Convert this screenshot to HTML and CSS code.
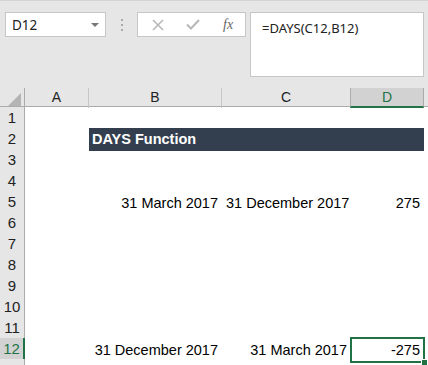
FILE: index.html
```html
<!DOCTYPE html>
<html lang="en">
<head>
    <meta charset="UTF-8">
    <title>DAYS Function</title>
    <link rel="stylesheet" href="styles.css">
</head>
<body>
    <div class="window">
        <div class="toolbar">
            <div class="name-box">
                <span>D12</span>
                <span class="caret"></span>
            </div>
            <div class="dots"><i></i><i></i><i></i></div>
            <div class="fx-buttons">
                <svg width="12" height="12" viewBox="0 0 12 12"><path d="M1 1 L11 11 M11 1 L1 11" stroke="#b8b8b8" stroke-width="1.6" fill="none"/></svg>
                <svg width="14" height="11" viewBox="0 0 14 11"><path d="M1 5.5 L5 9.5 L13 1" stroke="#b8b8b8" stroke-width="2" fill="none"/></svg>
                <span class="fx">fx</span>
            </div>
            <div class="formula">=DAYS(C12,B12)</div>
        </div>

        <div class="sheet">
            <div class="row head">
                <div class="corner"><svg width="13" height="13" viewBox="0 0 13 13"><path d="M13 0 L13 13 L0 13 Z" fill="#b4b4b4"/></svg></div>
                <div class="col">A</div>
                <div class="col">B</div>
                <div class="col">C</div>
                <div class="col active">D</div>
                <div class="col rest"></div>
            </div>
            <div class="row"><div class="num">1</div></div>
            <div class="row">
                <div class="num">2</div>
                <div class="cell"></div>
                <div class="cell title">DAYS Function</div>
            </div>
            <div class="row"><div class="num">3</div></div>
            <div class="row"><div class="num">4</div></div>
            <div class="row">
                <div class="num">5</div>
                <div class="cell"></div>
                <div class="cell right">31 March 2017</div>
                <div class="cell right">31 December 2017</div>
                <div class="cell right">275</div>
            </div>
            <div class="row"><div class="num">6</div></div>
            <div class="row"><div class="num">7</div></div>
            <div class="row"><div class="num">8</div></div>
            <div class="row"><div class="num">9</div></div>
            <div class="row"><div class="num">10</div></div>
            <div class="row"><div class="num">11</div></div>
            <div class="row">
                <div class="num active">12</div>
                <div class="cell"></div>
                <div class="cell right">31 December 2017</div>
                <div class="cell right">31 March 2017</div>
                <div class="cell right selected">-275</div>
            </div>
            <div class="row"><div class="num"></div></div>
        </div>
    </div>
</body>
</html>
```

FILE: styles.css
```css
body {
    margin: 0;
    background-color: #fff;
    font-family: "Liberation Sans", Arial, sans-serif;
}
.window {
    width: 428px;
    height: 365px;
    overflow: hidden;
}
.toolbar {
    height: 88px;
    background-color: #e6e6e6;
    border-top: 1px solid #d4d4d4;
    display: flex;
    align-items: flex-start;
    padding: 11px 0 0 5px;
    box-sizing: border-box;
}
.name-box {
    width: 101px;
    height: 25px;
    box-sizing: border-box;
    background-color: #fff;
    border: 1px solid #c6c6c6;
    display: flex;
    align-items: center;
    justify-content: space-between;
    padding: 0 6px 0 6px;
    font-family: "Noto Sans", sans-serif;
    font-size: 13.5px;
    color: #222;
}
.caret {
    width: 0;
    height: 0;
    border-left: 4px solid transparent;
    border-right: 4px solid transparent;
    border-top: 4px solid #777;
}
.dots {
    width: 31px;
    height: 25px;
    display: flex;
    flex-direction: column;
    align-items: center;
    justify-content: center;
    gap: 3px;
}
.dots i {
    width: 2px;
    height: 2px;
    background-color: #aaa;
}
.fx-buttons {
    width: 109px;
    height: 25px;
    box-sizing: border-box;
    background-color: #fff;
    border: 1px solid #c6c6c6;
    display: flex;
    align-items: center;
    padding: 0 0 0 14px;
    gap: 22px;
}
.fx {
    font-family: "Liberation Serif", serif;
    font-style: italic;
    font-size: 14px;
    color: #666;
    margin-left: 1px;
}
.formula {
    margin-left: 4px;
    width: 174px;
    height: 65px;
    box-sizing: border-box;
    background-color: #fff;
    border: 1px solid #c6c6c6;
    padding: 6px 0 0 11px;
    font-family: "Noto Sans", sans-serif;
    font-size: 13px;
    color: #222;
}
.row {
    display: grid;
    grid-template-columns: 25px 64px 133px 129px 73px 4px;
    height: 21px;
}
.row.head {
    height: 19px;
    background-color: #e6e6e6;
    border-bottom: 1px solid #ababab;
    box-sizing: border-box;
}
.corner {
    border-right: 1px solid #ababab;
    display: flex;
    align-items: flex-end;
    justify-content: flex-end;
    padding: 0 3px 2px 0;
}
.col {
    border-right: 1px solid #c6c6c6;
    text-align: center;
    font-size: 14px;
    line-height: 19px;
    color: #222;
}
.col.active {
    background-color: #d2d2d2;
    color: #217346;
    border-left: 1px solid #ababab;
    border-right: 1px solid #ababab;
    border-bottom: 2px solid #217346;
    margin-left: -1px;
    line-height: 18px;
}
.col.rest {
    border-right: none;
}
.num {
    background-color: #e6e6e6;
    border-right: 1px solid #ababab;
    border-bottom: 1px solid #d0d0d0;
    text-align: center;
    font-size: 15px;
    line-height: 21px;
    color: #222;
}
.num.active {
    background-color: #d2d2d2;
    color: #217346;
    border-right: 2px solid #217346;
}
.cell {
    font-size: 14.5px;
    line-height: 25px;
    color: #000;
    padding: 0 4px;
    white-space: nowrap;
}
.cell.right {
    text-align: right;
}
.cell.title {
    grid-column: 3 / 6;
    background-color: #333f4f;
    color: #fff;
    font-weight: bold;
    line-height: 23px;
    padding: 0 3px;
}
.cell.selected {
    position: relative;
}
.cell.selected::before {
    content: "";
    position: absolute;
    left: -1px;
    top: -1px;
    right: -1px;
    bottom: 0;
    border: 2px solid #217346;
}
.cell.selected::after {
    content: "";
    position: absolute;
    right: -4px;
    bottom: -3px;
    width: 5px;
    height: 5px;
    background-color: #217346;
    border: 1px solid #fff;
}
```
